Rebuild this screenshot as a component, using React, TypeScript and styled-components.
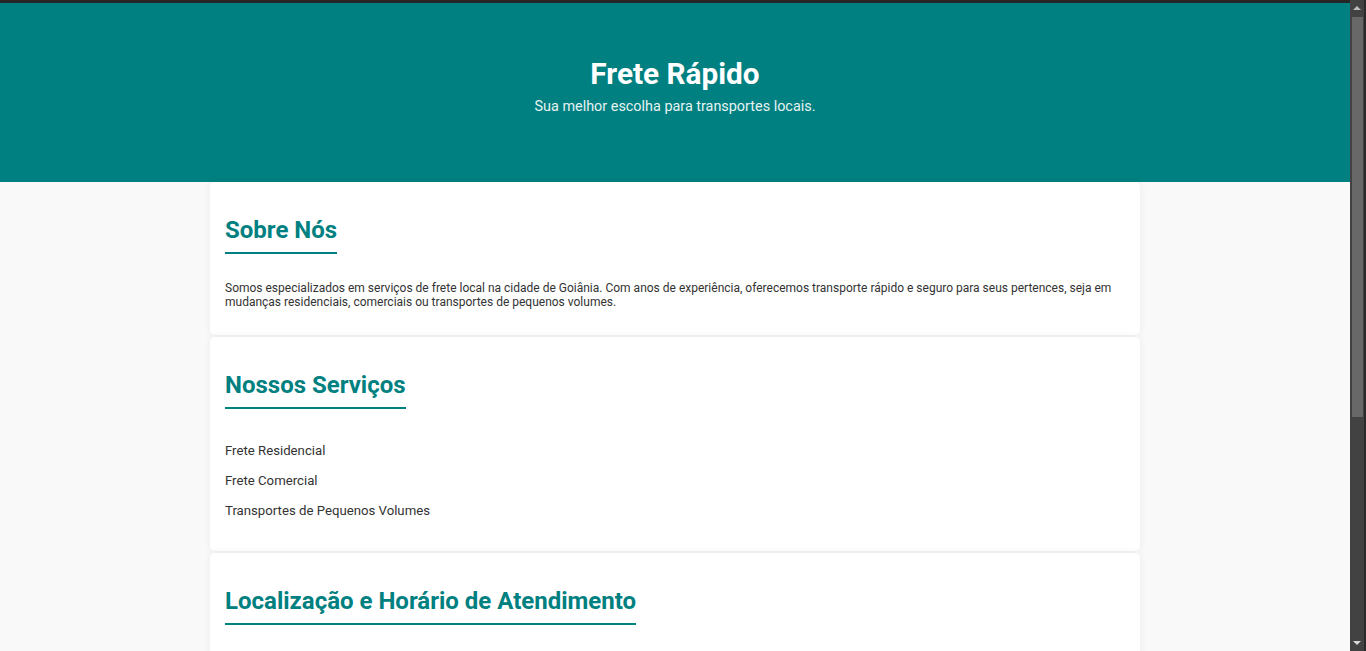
import React from "react";
import styled, { createGlobalStyle } from "styled-components";

const GlobalStyle = createGlobalStyle`
  body {
    margin: 0;
    padding-right: 16px;
    background: #f9f9f9;
    font-family: Roboto, "Liberation Sans", Arial, sans-serif;
    color: #333333;
  }
`;

const Header = styled.header`
  background: #008080;
  border-top: 3px solid #262626;
  padding: 53px 20px 67px;
  text-align: center;
  color: #ffffff;
`;

const Title = styled.h1`
  margin: 0;
  font-size: 29.75px;
  font-weight: 700;
  line-height: 35px;
`;

const Subtitle = styled.p`
  margin: 7px 0 0;
  font-size: 14.4px;
  line-height: 17px;
  color: #e6f3f3;
`;

const Main = styled.main`
  max-width: 930px;
  margin: 0 auto;
  display: flex;
  flex-direction: column;
  gap: 2px;
`;

const Card = styled.section<{ $bottom?: number }>`
  background: #ffffff;
  border-radius: 5px;
  box-shadow: 0 0 8px rgba(0, 0, 0, 0.06);
  padding: 34px 15px ${(p) => p.$bottom ?? 26}px;
`;

const Heading = styled.h2`
  margin: 0;
  width: fit-content;
  font-size: 24px;
  font-weight: 700;
  line-height: 28px;
  color: #008080;
  padding-bottom: 8px;
  border-bottom: 2px solid #008080;
`;

const Text = styled.p`
  margin: 27px 0 0;
  font-size: 12px;
  line-height: 14px;
  color: #333333;
`;

const List = styled.ul`
  list-style: none;
  margin: 33px 0 0;
  padding: 0;
  display: flex;
  flex-direction: column;
  gap: 13px;
`;

const Item = styled.li`
  font-size: 13.2px;
  line-height: 17px;
  color: #333333;
`;

const Footer = styled.footer`
  margin-top: 20px;
  background: #008080;
  color: #ffffff;
  text-align: center;
  padding: 16px;
  font-size: 12px;
`;

const Scrollbar = styled.div`
  position: fixed;
  top: 0;
  right: 0;
  width: 16px;
  height: 100vh;
  background: #424242;
  border-right: 2px solid #2a2a2a;
  box-sizing: border-box;
  display: flex;
  flex-direction: column;
  align-items: center;
`;

const Arrow = styled.div<{ $down?: boolean }>`
  width: 14px;
  height: 16px;
  display: flex;
  align-items: center;
  justify-content: center;
  flex: none;
  &::before {
    content: "";
    width: 0;
    height: 0;
    border-left: 4px solid transparent;
    border-right: 4px solid transparent;
    ${(p) =>
      p.$down ? "border-top: 4px solid #d8d8d8;" : "border-bottom: 4px solid #bdbdbd;"}
  }
`;

const Thumb = styled.div`
  width: 11px;
  height: 400px;
  margin-top: 1px;
  background: #686868;
  flex: none;
`;

const Spacer = styled.div`
  flex: 1;
`;

export default function App() {
  return (
    <>
      <GlobalStyle />
      <Header>
        <Title>Frete Rápido</Title>
        <Subtitle>Sua melhor escolha para transportes locais.</Subtitle>
      </Header>
      <Main>
        <Card>
          <Heading>Sobre Nós</Heading>
          <Text>
            Somos especializados em serviços de frete local na cidade de Goiânia. Com anos de experiência,
            oferecemos transporte rápido e seguro para seus pertences, seja em mudanças residenciais,
            comerciais ou transportes de pequenos volumes.
          </Text>
        </Card>
        <Card $bottom={32}>
          <Heading>Nossos Serviços</Heading>
          <List>
            <Item>Frete Residencial</Item>
            <Item>Frete Comercial</Item>
            <Item>Transportes de Pequenos Volumes</Item>
          </List>
        </Card>
        <Card>
          <Heading>Localização e Horário de Atendimento</Heading>
          <Text>Atendemos toda a região de Goiânia e cidades vizinhas.</Text>
          <Text>Horário de atendimento: Segunda a Sexta, das 8h às 18h. Sábado, das 8h às 12h.</Text>
        </Card>
        <Card>
          <Heading>Contato</Heading>
          <Text>Telefone / WhatsApp: (62) 99999-9999</Text>
          <Text>E-mail: contato@freterapido.com.br</Text>
        </Card>
      </Main>
      <Footer>© 2024 Frete Rápido. Todos os direitos reservados.</Footer>
      <Scrollbar aria-hidden="true">
        <Arrow />
        <Thumb />
        <Spacer />
        <Arrow $down />
      </Scrollbar>
    </>
  );
}
